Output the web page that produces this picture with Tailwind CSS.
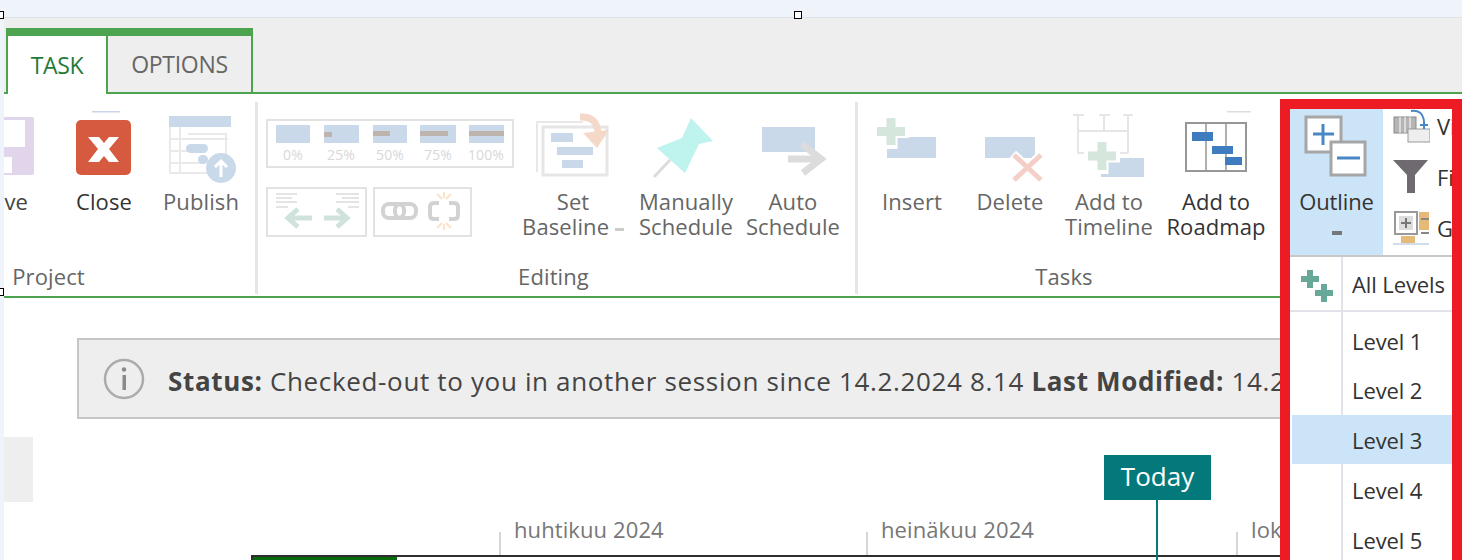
<!DOCTYPE html>
<html lang="en">
<head>
<meta charset="UTF-8">
<title>Project ribbon</title>
<script src="https://cdn.jsdelivr.net/npm/@tailwindcss/browser@4"></script>
</head>
<body class="w-[1462px] h-[560px] overflow-hidden relative bg-white font-['Open_Sans',sans-serif] text-[#444]">

<!-- top strip -->
<div class="h-[18px] bg-[#eef4fa] border-b border-[#dde3e8]"></div>

<div class="flex h-[542px]">
  <div class="w-[4px] shrink-0 bg-[#eef4fa]"></div>
  <div class="flex-1 min-w-0 overflow-hidden">

    <!-- tabs -->
    <div class="h-[76px] bg-[#eee] flex items-end border-b-2 border-[#4ea44e] pl-[2px]">
      <div class="w-[247px] h-[66px] -mb-[2px] flex border-t-[8px] border-x-2 border-[#4ea44e] text-[23px] tracking-[-0.3px]">
        <div class="w-[100px] bg-white flex items-center justify-center text-[#1f7a3a] border-r-2 border-[#4ea44e]">TASK</div>
        <div class="flex-1 flex items-center justify-center text-[#666] border-b-2 border-[#4ea44e]">OPTIONS</div>
      </div>
    </div>

    <!-- ribbon -->
    <div class="h-[204px] flex border-b-2 border-[#4ea44e] text-[22px] leading-[25px] tracking-[0.1px] text-center">

      <!-- Project -->
      <div class="w-[416px] -ml-[162px] shrink-0 flex flex-col border-r-[3px] border-[#e6e6e6] mb-[2px] mt-[8px]">
        <div class="flex-1 flex justify-end pr-[10px]">
          <div class="w-[88px] flex flex-col items-center">
            <svg class="w-[88px] h-[88px]" viewBox="0 0 88 88"><rect x="8" y="15" width="63" height="58" rx="2" fill="#e0d5ea"/><rect x="8" y="18" width="54" height="27" fill="#fff"/><rect x="8" y="55" width="41" height="16" fill="#fff"/></svg>
            <span class="mt-[-1px] pr-[6px]">Save</span>
          </div>
          <div class="w-[106px] flex flex-col items-center text-[#333]">
            <svg class="w-[88px] h-[88px]" viewBox="0 0 88 88"><rect x="32" y="9" width="28" height="1.5" fill="#c9d5e6"/><rect x="16" y="18" width="55" height="55" rx="5" fill="#d65a3f"/><path d="M28 35h11l5 6 5-6h10l-10 12 10 13H49l-5-6-5 6H28l10-13z" fill="#fff"/></svg>
            <span class="mt-[-1px]">Close</span>
          </div>
          <div class="w-[88px] flex flex-col items-center text-[#666]">
            <svg class="w-[88px] h-[88px]" viewBox="0 0 88 88"><rect x="12" y="14" width="62" height="11" fill="#c9d9ea"/><path d="M13 25v46h40M23 25v46M13 37h58M13 49h36M13 61h36M31 32h38v22" fill="none" stroke="#eaeaea" stroke-width="2"/><rect x="29" y="42" width="22" height="9" rx="4.5" fill="#c9d9ea"/><rect x="41" y="53" width="10" height="9" rx="4.5" fill="#c9d9ea"/><circle cx="64" cy="66" r="15" fill="#c9d9ea"/><path d="M64 75V60M58 65l6-6 6 6" fill="none" stroke="#fff" stroke-width="3"/></svg>
            <span class="mt-[-1px]">Publish</span>
          </div>
        </div>
        <div class="h-[30px] text-[#666]">Project</div>
      </div>

      <!-- Editing -->
      <div class="w-[600px] shrink-0 flex flex-col border-r-[3px] border-[#e6e6e6] mb-[2px] mt-[8px]">
        <div class="flex-1 flex">
          <div class="w-[260px] pl-[8px] pt-[17px] shrink-0">
            <svg class="w-[248px] h-[50px]" viewBox="0 0 248 50"><rect x="1" y="1" width="246" height="47" fill="none" stroke="#e2e2e2" stroke-width="2"/><rect x="10" y="6" width="34" height="18" fill="#c9d9ea"/><rect x="58" y="6" width="35" height="18" fill="#c9d9ea"/><rect x="58" y="13" width="8" height="5" fill="#bdb4ad"/><rect x="107" y="6" width="34" height="18" fill="#c9d9ea"/><rect x="107" y="12" width="17" height="5" fill="#bdb4ad"/><rect x="154" y="6" width="36" height="18" fill="#c9d9ea"/><rect x="154" y="12" width="28" height="5" fill="#bdb4ad"/><rect x="203" y="6" width="35" height="18" fill="#c9d9ea"/><rect x="203" y="12" width="35" height="5" fill="#bdb4ad"/><g font-family="Open Sans" font-size="14" fill="#d8d8d8" text-anchor="middle"><text x="27" y="41">0%</text><text x="75" y="41">25%</text><text x="124" y="41">50%</text><text x="172" y="41">75%</text><text x="220" y="41">100%</text></g></svg>
            <div class="flex gap-[6px] mt-[18px]">
              <svg class="w-[101px] h-[50px]" viewBox="0 0 101 50"><rect x="1" y="1" width="99" height="48" fill="none" stroke="#e2e2e2" stroke-width="2"/><path d="M10 7h21M10 11h16M10 15h21M10 20h12M70 7h23M76 11h17M70 15h23M82 20h11" stroke="#e4e4e4" stroke-width="2"/><path d="M46 31H24M32 22l-10 9 10 9M58 31h21M71 22l10 9-10 9" fill="none" stroke="#cfe3dc" stroke-width="5"/></svg>
              <svg class="w-[99px] h-[50px]" viewBox="0 0 99 50"><rect x="1" y="1" width="97" height="48" fill="none" stroke="#e2e2e2" stroke-width="2"/><rect x="10" y="17" width="21" height="14" rx="6" fill="none" stroke="#d2d2d2" stroke-width="4"/><rect x="22" y="17" width="21" height="14" rx="6" fill="none" stroke="#d2d2d2" stroke-width="4"/><path d="M66 16h-5q-4 0-4 4v8q0 4 4 4h5M76 16h5q4 0 4 4v8q0 4-4 4h-5" fill="none" stroke="#d2d2d2" stroke-width="4"/><path d="M64 7l5 5M78 7l-5 5M64 41l5-5M78 41l-5-5M71 5v6M71 37v6" stroke="#fde3c8" stroke-width="2"/></svg>
            </div>
          </div>
          <div class="w-[110px] shrink-0 flex flex-col items-center">
            <svg class="w-[88px] h-[88px]" viewBox="0 0 88 88"><path d="M8 70V20h46" fill="none" stroke="#e8e8e8" stroke-width="2"/><path d="M14 73V25h64v48z" fill="none" stroke="#e6e6e6" stroke-width="3"/><rect x="22" y="31" width="22" height="9" fill="#c9d9ea"/><rect x="28" y="45" width="36" height="8" fill="#c9d9ea"/><rect x="33" y="58" width="21" height="8" fill="#c9d9ea"/><path d="M51 15q17-1 18 16" fill="none" stroke="#f4d8c8" stroke-width="7"/><path d="M54 31l26-3-12 18z" fill="#f4d8c8"/></svg>
            <span class="mt-[-1px] text-[#666] whitespace-nowrap">Set<br>Baseline <span class="inline-block align-middle w-[9px] h-[3px] bg-[#ccc]"></span></span>
          </div>
          <div class="w-[112px] ml-[2px] shrink-0 flex flex-col items-center">
            <svg class="w-[88px] h-[88px]" viewBox="0 0 88 88"><path d="M12 75l16-17" stroke="#dcdcdc" stroke-width="3"/><path d="M49 16l22 23-14 3-14 29-28-25 25-10z" fill="#bff3ee"/></svg>
            <span class="mt-[-1px] text-[#666]">Manually Schedule</span>
          </div>
          <div class="w-[102px] shrink-0 flex flex-col items-center">
            <svg class="w-[88px] h-[88px]" viewBox="0 0 88 88"><rect x="13" y="25" width="53" height="25" fill="#c9d9ea"/><path d="M39 57h30" stroke="#dcdcdc" stroke-width="7"/><path d="M53 42l19 15-18 14" fill="none" stroke="#dcdcdc" stroke-width="7"/></svg>
            <span class="mt-[-1px] text-[#666]">Auto Schedule</span>
          </div>
        </div>
        <div class="h-[30px] pr-[6px] text-[#666]">Editing</div>
      </div>

      <!-- Tasks -->
      <div class="w-[415px] shrink-0 flex flex-col mb-[2px] mt-[8px] pl-[5px]">
        <div class="flex-1 flex">
          <div class="w-[98px] flex flex-col items-center">
            <svg class="w-[88px] h-[88px]" viewBox="0 0 88 88"><rect x="19" y="35" width="49" height="21" fill="#c9d9ea"/><path d="M23 12v35M5 29.500h36" stroke="#fff" stroke-width="13"/><path d="M23 16v27M9 29.500h28" stroke="#d5e6dd" stroke-width="9"/></svg>
            <span class="mt-[-1px] text-[#666]">Insert</span>
          </div>
          <div class="w-[98px] flex flex-col items-center">
            <svg class="w-[88px] h-[88px]" viewBox="0 0 88 88"><rect x="19" y="35" width="50" height="21" fill="#c9d9ea"/><path d="M47 52l29 27M76 52L47 79" stroke="#fff" stroke-width="9"/><path d="M48 53l27 25M75 53L48 78" stroke="#f3cfc8" stroke-width="5"/></svg>
            <span class="mt-[-1px] text-[#666]">Delete</span>
          </div>
          <div class="w-[100px] flex flex-col items-center">
            <svg class="w-[88px] h-[88px]" viewBox="0 0 88 88"><path d="M8 13h11M34 13h11M58 13h10M13 13v38h50M39 13v16M63 13v38M13 29h50" fill="none" stroke="#e6e6e6" stroke-width="2"/><rect x="34" y="54" width="47" height="23" fill="#fff"/><rect x="36" y="56" width="43" height="19" fill="#c9d9ea"/><path d="M37 36v36M19 54h36" stroke="#fff" stroke-width="13"/><path d="M37 40v28M23 54h28" stroke="#d5e6dd" stroke-width="9"/></svg>
            <span class="mt-[-1px] text-[#666]">Add to Timeline</span>
          </div>
          <div class="w-[114px] flex flex-col items-center text-[#333]">
            <svg class="w-[88px] h-[88px]" viewBox="0 0 88 88"><rect x="55" y="9" width="24" height="1.5" fill="#ddd"/><rect x="14" y="21" width="60" height="48" fill="none" stroke="#979797" stroke-width="2"/><path d="M34 21v48M54 21v48" stroke="#979797" stroke-width="1.5"/><rect x="20" y="30" width="21" height="9" fill="#3f7cbf"/><rect x="40" y="44" width="21" height="8" fill="#3f7cbf"/><rect x="53" y="55" width="17" height="8" fill="#3f7cbf"/></svg>
            <span class="mt-[-1px]">Add to Roadmap</span>
          </div>
        </div>
        <div class="h-[30px] pr-[8px] text-[#666]">Tasks</div>
      </div>
    </div>

    <!-- status, runs on under the red annotation -->
    <div class="mt-[40px] ml-[73px] h-[81px] w-[1206px] overflow-hidden bg-[#eee] border-2 border-[#c6c6c6] flex items-center pl-[24px] gap-[23px] text-[26px] tracking-[0.65px] whitespace-nowrap">
      <svg class="w-[42px] h-[42px] shrink-0" viewBox="0 0 42 42"><circle cx="21" cy="21" r="19" fill="none" stroke="#ababab" stroke-width="2.5"/><rect x="19.500" y="17" width="3.5" height="15" fill="#8a8a8a"/><circle cx="21" cy="11.500" r="2.2" fill="#8a8a8a"/></svg>
      <p class="pt-[6px]"><b>Status:</b> Checked-out to you in another session since 14.2.2024 8.14 <b>Last Modified:</b> 14.2</p>
    </div>

    <div class="mt-[18px] h-[65px] w-[29px] bg-[#eee]"></div>

    <!-- timeline -->
    <div class="ml-[247px] h-[55px] flex items-end border-b-2 border-[#2e2e2e] text-[22px] text-[#777] tracking-[0.1px] whitespace-nowrap">
      <div class="w-[248px]"></div>
      <div class="w-[367px] h-[23px] border-l-2 border-[#d6d6d6] pl-[13px] leading-[12px]"><span class="relative -top-[9px]">huhtikuu 2024</span></div>
      <div class="w-[370px] h-[23px] border-l-2 border-[#d6d6d6] pl-[13px] leading-[12px]"><span class="relative -top-[9px]">heinäkuu 2024</span></div>
      <div class="w-[44px] h-[23px] border-l-2 border-[#d6d6d6] pl-[13px] leading-[12px]"><span class="relative -top-[9px]">lok</span></div>
    </div>
    <div class="ml-[247px] w-[146px] h-[4px] bg-[#066a0c] border-l-2 border-[#2e2e2e]"></div>
  </div>
</div>

<!-- today marker -->
<div class="absolute left-[1104px] top-[455px] flex flex-col items-center">
  <div class="w-[107px] h-[45px] bg-[#04797b] text-white text-[26px] pb-[3px] flex items-center justify-center">Today</div>
  <div class="w-[2px] h-[60px] bg-[#04797b] -ml-[2px]"></div>
</div>

<!-- selection handles -->
<div class="absolute left-[-4px] top-[11px] w-[8px] h-[8px] bg-white border border-black"></div>
<div class="absolute left-[794px] top-[11px] w-[8px] h-[8px] bg-white border border-black"></div>
<div class="absolute left-[-4px] top-[288px] w-[8px] h-[8px] bg-white border border-black"></div>

<!-- red annotation with outline menu -->
<div class="absolute left-[1280px] top-[99px] w-[182px] h-[480px] border-[10px] border-[#ed1c24] bg-white overflow-hidden text-[22px] tracking-[-0.1px] text-[#333] whitespace-nowrap">
  <div class="flex h-[146px]">
    <div class="w-[93px] shrink-0 bg-[#cce4f7] flex flex-col items-center">
      <svg class="w-[80px] h-[72px]" viewBox="0 0 80 72"><rect x="9" y="8" width="35" height="35" fill="#fff" stroke="#a6a6a6" stroke-width="3"/><path d="M26 15v21M16 25h21" stroke="#4a87c5" stroke-width="3"/><rect x="34" y="33" width="34" height="33" fill="#fff" stroke="#a6a6a6" stroke-width="3"/><path d="M40 49h23" stroke="#4a87c5" stroke-width="3"/></svg>
      <span class="mt-[4px]">Outline</span>
      <span class="w-[10px] h-[4px] bg-[#777] mt-[13px]"></span>
    </div>
    <div class="flex-1 flex flex-col pl-[10px] gap-[17px]">
      <div class="flex items-center gap-[7px] h-[34px]">
        <svg class="w-[37px] h-[34px] shrink-0" viewBox="0 0 37 34"><rect x="1" y="8" width="22" height="16" fill="#b5b5b5" stroke="#8a8a8a"/><path d="M7 8v16M12 8v16M17 8v16" stroke="#fff"/><rect x="15" y="20" width="22" height="13" fill="#eee" stroke="#999"/><path d="M18 2q11-2 13 10M31 12v8M27 16h8" fill="none" stroke="#4a87c5" stroke-width="2"/></svg><span>View</span>
      </div>
      <div class="flex items-center gap-[7px] h-[34px]">
        <svg class="w-[37px] h-[34px] shrink-0" viewBox="0 0 37 34"><path d="M0 0h35L22 15v18H14V15z" fill="#6f6a70"/></svg><span>Filter</span>
      </div>
      <div class="flex items-center gap-[7px] h-[34px]">
        <svg class="w-[37px] h-[34px] shrink-0" viewBox="0 0 37 34"><rect x="2" y="1" width="22" height="22" fill="#fff" stroke="#999" stroke-width="2"/><rect x="6" y="5" width="14" height="14" fill="#ddd"/><path d="M13 7v10M8 12h10" stroke="#777" stroke-width="2"/><rect x="26" y="1" width="10" height="18" fill="#e5b978"/><path d="M28 8h8M28 22h8" stroke="#888" stroke-width="2"/><rect x="8" y="25" width="14" height="7" fill="#e5b978"/><path d="M0 33h36" stroke="#a8bcd4"/></svg><span>Group</span>
      </div>
    </div>
  </div>
  <div class="h-[2px] bg-[#c8c8c8]"></div>

  <!-- rows -->
  <div class="flex h-[55px] items-center border-b-2 border-[#e2e2ea]">
    <div class="w-[53px] h-full shrink-0 border-r-2 border-[#e2e2ea] flex items-center justify-center">
      <svg class="w-[36px] h-[36px]" viewBox="0 0 36 36"><path d="M12 4v18M3 13h18M26 18v18M17 27h18" stroke="#67a898" stroke-width="6"/></svg>
    </div>
    <span class="pl-[9px] pt-[1px]">All Levels</span>
  </div>
  <div class="flex h-[4px]"><div class="w-[53px] border-r-2 border-[#e2e2ea]"></div></div>
  <div class="flex h-[49px] items-center"><div class="w-[53px] h-full border-r-2 border-[#e2e2ea]"></div><span class="pl-[9px] pt-[1px]">Level 1</span></div>
  <div class="flex h-[50px] items-center"><div class="w-[53px] h-full border-r-2 border-[#e2e2ea]"></div><span class="pl-[9px] pt-[1px]">Level 2</span></div>
  <div class="flex h-[49px] items-center ml-[2px] bg-[#cce4f7]"><div class="w-[51px] h-full"></div><span class="pl-[9px] pt-[1px]">Level 3</span></div>
  <div class="flex h-[51px] items-center"><div class="w-[53px] h-full border-r-2 border-[#e2e2ea]"></div><span class="pl-[9px] pt-[1px]">Level 4</span></div>
  <div class="flex h-[50px] items-center"><div class="w-[53px] h-full border-r-2 border-[#e2e2ea]"></div><span class="pl-[9px] pt-[1px]">Level 5</span></div>
</div>
</body>
</html>
